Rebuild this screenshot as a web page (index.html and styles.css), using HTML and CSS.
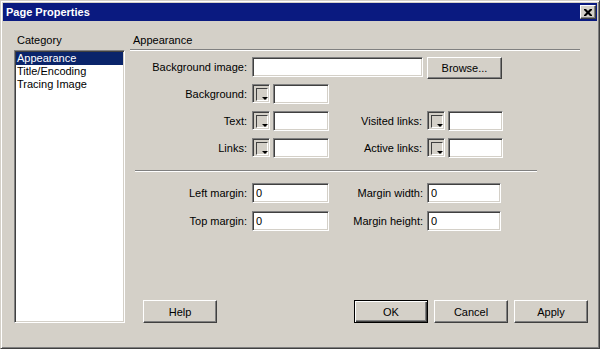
FILE: index.html
```html
<!DOCTYPE html>
<html lang="en">
<head>
    <meta charset="UTF-8">
    <title>Page Properties</title>
    <link rel="stylesheet" href="styles.css">
</head>
<body>
    <div class="window">
        <div class="titlebar">
            <span class="title">Page Properties</span>
            <button class="close-btn" aria-label="Close">
                <svg width="8" height="7" viewBox="0 0 8 7">
                    <path d="M0 0h2l2 2 2-2h2v1L5.5 3.5 8 6v1H6L4 5 2 7H0V6l2.5-2.5L0 1z" fill="#000"/>
                </svg>
            </button>
        </div>

        <div class="dialog-body">
            <!-- Lista de categorias -->
            <div class="category-col">
                <div class="caption">Category</div>
                <ul class="listbox">
                    <li class="selected">Appearance</li>
                    <li>Title/Encoding</li>
                    <li>Tracing Image</li>
                </ul>
            </div>

            <!-- Painel de propriedades -->
            <div class="panel">
                <div class="caption panel-title">Appearance</div>
                <div class="etched top-rule"></div>

                <div class="form-grid colors">
                    <label class="lbl">Background image:</label>
                    <input class="field wide" type="text">
                    <button class="btn browse">Browse...</button>

                    <label class="lbl">Background:</label>
                    <div class="color-ctl"><span class="swatch"></span><input class="field" type="text"></div>
                    <span></span><span></span>

                    <label class="lbl">Text:</label>
                    <div class="color-ctl"><span class="swatch"></span><input class="field" type="text"></div>
                    <label class="lbl">Visited links:</label>
                    <div class="color-ctl"><span class="swatch"></span><input class="field" type="text"></div>

                    <label class="lbl">Links:</label>
                    <div class="color-ctl"><span class="swatch"></span><input class="field" type="text"></div>
                    <label class="lbl">Active links:</label>
                    <div class="color-ctl"><span class="swatch"></span><input class="field" type="text"></div>
                </div>

                <div class="etched mid-rule"></div>

                <div class="form-grid margins">
                    <label class="lbl">Left margin:</label>
                    <input class="field" type="text" value="0">
                    <label class="lbl">Margin width:</label>
                    <input class="field short" type="text" value="0">

                    <label class="lbl">Top margin:</label>
                    <input class="field" type="text" value="0">
                    <label class="lbl">Margin height:</label>
                    <input class="field short" type="text" value="0">
                </div>

                <div class="button-row">
                    <button class="btn help">Help</button>
                    <div class="action-group">
                        <button class="btn default">OK</button>
                        <button class="btn">Cancel</button>
                        <button class="btn">Apply</button>
                    </div>
                </div>
            </div>
        </div>
    </div>
</body>
</html>
```

FILE: styles.css
```css
* {
    box-sizing: border-box;
}

body {
    margin: 0;
    background-color: #D4D0C8;
    font-family: "Liberation Sans", Arial, sans-serif;
    font-size: 11px;
    color: #000000;
}

.window {
    display: flex;
    flex-direction: column;
    width: 600px;
    height: 349px;
    padding: 2px;
    background-color: #D4D0C8;
    border: 1px solid;
    border-color: #D4D0C8 #404040 #404040 #D4D0C8;
    box-shadow: inset 1px 1px 0 #ffffff, inset -1px -1px 0 #808080;
}

.titlebar {
    display: flex;
    align-items: center;
    justify-content: space-between;
    height: 18px;
    padding: 0 1px 0 3px;
    background-color: #0A1A80;
}

.title {
    color: #ffffff;
    font-weight: bold;
    font-size: 11px;
}

.close-btn {
    display: flex;
    align-items: center;
    justify-content: center;
    width: 16px;
    height: 14px;
    padding: 0;
    background-color: #D4D0C8;
    border: 1px solid;
    border-color: #ffffff #404040 #404040 #ffffff;
    box-shadow: inset -1px -1px 0 #808080;
}

.dialog-body {
    flex: 1;
    display: flex;
    gap: 5px;
    padding: 13px 9px 23px 11px;
}

.caption {
    height: 13px;
    line-height: 13px;
    padding-left: 3px;
}

/* Coluna da esquerda */
.category-col {
    display: flex;
    flex-direction: column;
    width: 111px;
}

.listbox {
    flex: 1;
    margin: 3px 0 0 0;
    padding: 0;
    list-style: none;
    background-color: #ffffff;
    border: 1px solid;
    border-color: #808080 #ffffff #ffffff #808080;
    box-shadow: inset 1px 1px 0 #404040, inset -1px -1px 0 #D4D0C8;
    padding: 1px;
}

.listbox li {
    height: 13px;
    line-height: 12px;
    padding-left: 1px;
}

.listbox li.selected {
    background-color: #0A246A;
    color: #ffffff;
}

/* Painel da direita */
.panel {
    flex: 1;
    display: flex;
    flex-direction: column;
}

.etched {
    height: 2px;
    border-top: 1px solid #808080;
    border-bottom: 1px solid #ffffff;
}

.top-rule {
    margin: 2px 8px 0 0;
}

.mid-rule {
    width: 402px;
    margin: 12px 0 0 5px;
}

.form-grid {
    display: grid;
    grid-template-columns: 122px 77px 98px 76px;
    grid-auto-rows: 20px;
    align-items: center;
}

.colors {
    margin-top: 6px;
    row-gap: 7px;
}

.margins {
    margin-top: 11px;
    row-gap: 8px;
}

.lbl {
    text-align: right;
    padding-right: 5px;
    white-space: nowrap;
}

.form-grid .lbl:nth-child(4n+3) {
    padding-right: 4px;
}

.colors .lbl:nth-of-type(n) {
    padding-right: 5px;
}

.field {
    height: 20px;
    width: 100%;
    padding: 0 3px;
    font-family: inherit;
    font-size: 11px;
    color: #000000;
    background-color: #ffffff;
    border: 1px solid;
    border-color: #808080 #ffffff #ffffff #808080;
    box-shadow: inset 1px 1px 0 #404040, inset -1px -1px 0 #D4D0C8;
    outline: none;
}

.field.wide {
    grid-column: 2 / 4;
    width: 171px;
}

.field.short {
    width: 74px;
}

.color-ctl {
    display: flex;
    gap: 3px;
    height: 20px;
}

.swatch {
    position: relative;
    flex: none;
    width: 18px;
    height: 19px;
    border: 1px solid;
    border-color: #808080 #ffffff #ffffff #808080;
    box-shadow: inset 1px 1px 0 #404040;
}

.swatch::before {
    content: "";
    position: absolute;
    left: 3px;
    top: 3px;
    width: 10px;
    height: 11px;
    border: 1px solid;
    border-color: #404040 #ffffff #ffffff #404040;
}

.swatch::after {
    content: "";
    position: absolute;
    right: 1px;
    bottom: 2px;
    border-left: 3px solid transparent;
    border-right: 3px solid transparent;
    border-top: 3px solid #000000;
}

.btn {
    width: 74px;
    height: 23px;
    padding: 0;
    font-family: inherit;
    font-size: 11px;
    color: #000000;
    background-color: #D4D0C8;
    border: 1px solid;
    border-color: #ffffff #404040 #404040 #ffffff;
    box-shadow: inset -1px -1px 0 #808080;
}

.btn.browse {
    width: 75px;
    height: 22px;
    align-self: start;
}

.btn.default {
    border: 1px solid #000000;
    box-shadow: inset 1px 1px 0 #ffffff, inset -1px -1px 0 #404040, inset -2px -2px 0 #808080;
}

.button-row {
    margin-top: auto;
    display: flex;
    justify-content: space-between;
    align-items: flex-end;
}

.btn.help {
    margin-left: 13px;
}

.action-group {
    display: flex;
    gap: 6px;
}
```
